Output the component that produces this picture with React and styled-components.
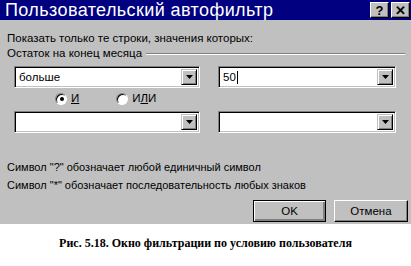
import React, { useState } from 'react';
import styled, { createGlobalStyle } from 'styled-components';

const GlobalStyle = createGlobalStyle`
  body {
    margin: 0;
    background: #ffffff;
    font-family: "Liberation Sans", Arial, sans-serif;
  }
`;

const Page = styled.div`
  width: 411px;
  height: 266px;
  display: flex;
  flex-direction: column;
`;

const Dialog = styled.div`
  width: 411px;
  height: 224px;
  background: #c0c0c0;
  display: flex;
  flex-direction: column;
`;

const TitleBar = styled.div`
  height: 20px;
  background: #000080;
  display: flex;
  align-items: center;
  justify-content: space-between;
  padding: 0 1px 0 5px;
`;

const Title = styled.div`
  color: #ffffff;
  font-size: 18px;
  letter-spacing: 0.4px;
`;

const TitleButtons = styled.div`
  display: flex;
  gap: 2px;
`;

const CaptionButton = styled.div`
  width: 19px;
  height: 16px;
  box-sizing: border-box;
  background: #c0c0c0;
  border-top: 1px solid #ffffff;
  border-left: 1px solid #ffffff;
  border-right: 1px solid #000000;
  border-bottom: 1px solid #000000;
  box-shadow: inset -1px -1px 0 #808080;
  display: flex;
  align-items: center;
  justify-content: center;
  font-weight: bold;
  font-size: 13px;
  color: #000;
`;

const Body = styled.div`
  padding: 12px 3px 0 7px;
  font-size: 11.5px;
  line-height: 13px;
  color: #000;
`;

const Prompt = styled.div``;

const FieldLabel = styled.div`
  display: flex;
  align-items: center;
  gap: 4px;
  margin-top: 2px;
  margin-right: 3px;
`;

const Groove = styled.div`
  flex: 1;
  height: 0;
  border-top: 1px solid #808080;
  border-bottom: 1px solid #ffffff;
  margin-top: 1px;
`;

const ConditionRow = styled.div`
  display: grid;
  grid-template-columns: 186px 178px;
  column-gap: 18px;
  margin-left: 7px;
  margin-top: ${(p) => p.$top}px;
`;

const ComboBox = styled.div`
  height: 22px;
  box-sizing: border-box;
  background: #ffffff;
  border-top: 1px solid #808080;
  border-left: 1px solid #808080;
  border-right: 1px solid #ffffff;
  border-bottom: 1px solid #ffffff;
  box-shadow: inset 1px 1px 0 #000000, inset -1px -1px 0 #c0c0c0;
  display: flex;
  align-items: center;
  padding: 2px;
`;

const ComboText = styled.div`
  flex: 1;
  padding-left: 2px;
  font-size: 11.5px;
  display: flex;
  align-items: center;
`;

const Caret = styled.span`
  display: inline-block;
  width: 1px;
  height: 13px;
  background: #000;
  margin-left: 1px;
`;

const ArrowButton = styled.div`
  width: 16px;
  height: 16px;
  box-sizing: border-box;
  background: #c0c0c0;
  border-top: 1px solid #c0c0c0;
  border-left: 1px solid #c0c0c0;
  border-right: 1px solid #000000;
  border-bottom: 1px solid #000000;
  box-shadow: inset 1px 1px 0 #ffffff, inset -1px -1px 0 #808080;
  display: flex;
  align-items: center;
  justify-content: center;
`;

const RadioRow = styled.div`
  display: flex;
  align-items: center;
  margin: 4px 0 0 48px;
  gap: 37px;
`;

const RadioOption = styled.label`
  display: flex;
  align-items: center;
  gap: 4px;
  cursor: default;
`;

const RadioCircle = styled.span`
  width: 12px;
  height: 12px;
  box-sizing: border-box;
  border-radius: 50%;
  background: #ffffff;
  border: 1px solid;
  border-color: #808080 #ffffff #ffffff #808080;
  box-shadow: inset 1px 1px 0 #000000;
  display: flex;
  align-items: center;
  justify-content: center;

  &::after {
    content: '';
    width: 4px;
    height: 4px;
    border-radius: 50%;
    background: ${(p) => (p.$checked ? '#000' : 'transparent')};
    margin: 1px 0 0 1px;
  }
`;

const Hotkey = styled.span`
  text-decoration: underline;
`;

const Hints = styled.div`
  margin-top: 28px;
  display: flex;
  flex-direction: column;
  gap: 5px;
  font-size: 11px;
`;

const ButtonRow = styled.div`
  display: flex;
  justify-content: flex-end;
  gap: 8px;
  margin: 8px 0 0 0;
`;

const PushButton = styled.button`
  width: ${(p) => (p.$default ? 73 : 74)}px;
  height: 22px;
  box-sizing: border-box;
  background: #c0c0c0;
  font-family: "Liberation Sans", Arial, sans-serif;
  font-size: 11.5px;
  color: #000;
  padding: 0;
  border: 1px solid;
  border-color: ${(p) =>
    p.$default ? '#000' : '#ffffff #000000 #000000 #ffffff'};
  box-shadow: ${(p) =>
    p.$default
      ? 'inset 1px 1px 0 #ffffff, inset -2px -2px 0 #808080'
      : 'inset -1px -1px 0 #808080'};
`;

const FigureCaption = styled.div`
  flex: 1;
  display: flex;
  justify-content: center;
  padding-top: 12px;
  font-family: "Liberation Serif", "Times New Roman", serif;
  font-weight: bold;
  font-size: 12px;
  color: #000;
`;

const DownArrow = () => (
  <svg width="7" height="4" viewBox="0 0 7 4">
    <path d="M0 0h7L3.5 4z" fill="#000" />
  </svg>
);

const Combo = ({ children }) => (
  <ComboBox>
    <ComboText>{children}</ComboText>
    <ArrowButton>
      <DownArrow />
    </ArrowButton>
  </ComboBox>
);

const App = () => {
  const [mode, setMode] = useState('and');

  return (
    <Page>
      <GlobalStyle />
      <Dialog>
        <TitleBar>
          <Title>Пользовательский автофильтр</Title>
          <TitleButtons>
            <CaptionButton>?</CaptionButton>
            <CaptionButton>✕</CaptionButton>
          </TitleButtons>
        </TitleBar>
        <Body>
          <Prompt>Показать только те строки, значения которых:</Prompt>
          <FieldLabel>
            Остаток на конец месяца
            <Groove />
          </FieldLabel>
          <ConditionRow $top={6}>
            <Combo>больше</Combo>
            <Combo>
              50<Caret />
            </Combo>
          </ConditionRow>
          <RadioRow>
            <RadioOption onClick={() => setMode('and')}>
              <RadioCircle $checked={mode === 'and'} />
              <Hotkey>И</Hotkey>
            </RadioOption>
            <RadioOption onClick={() => setMode('or')}>
              <RadioCircle $checked={mode === 'or'} />
              <span>
                И<Hotkey>Л</Hotkey>И
              </span>
            </RadioOption>
          </RadioRow>
          <ConditionRow $top={6}>
            <Combo />
            <Combo />
          </ConditionRow>
          <Hints>
            <div>Символ "?" обозначает любой единичный символ</div>
            <div>Символ "*" обозначает последовательность любых знаков</div>
          </Hints>
          <ButtonRow>
            <PushButton $default>OK</PushButton>
            <PushButton>Отмена</PushButton>
          </ButtonRow>
        </Body>
      </Dialog>
      <FigureCaption>Рис. 5.18. Окно фильтрации по условию пользователя</FigureCaption>
    </Page>
  );
};

export default App;
